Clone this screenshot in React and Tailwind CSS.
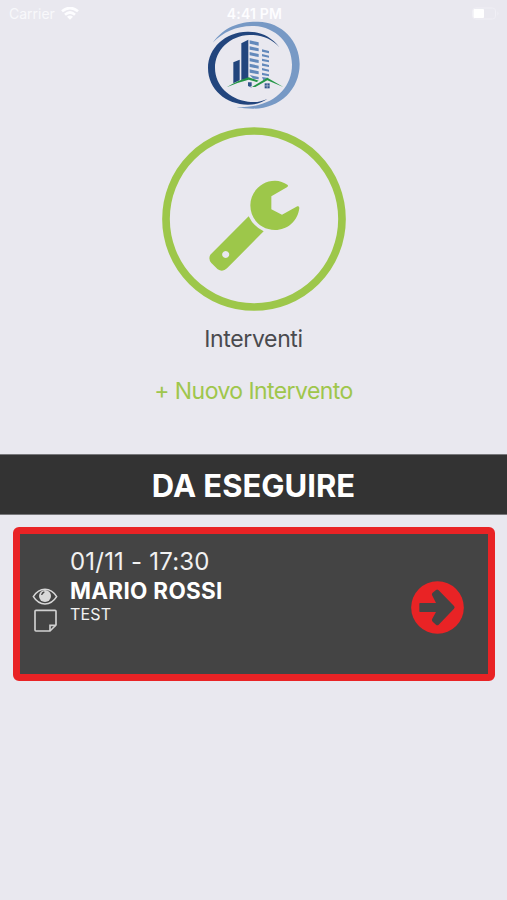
import React from 'react';

const jobs = [
  { id: 1, date: '01/11 - 17:30', customer: 'MARIO ROSSI', note: 'TEST' },
];

function App() {
  return (
    <div className="flex min-h-screen flex-col bg-[#e9e8ef] font-['Inter',sans-serif]">
      <StatusBar />

      <header className="flex flex-col items-center">
        <Logo />
        <WrenchBadge />
        <h1 className="mt-[13px] text-[23px] leading-[30px] tracking-[-0.35px] text-[#4a4a4e]">Interventi</h1>
        <button className="mt-[22px] text-[23px] leading-[30px] tracking-[-0.58px] text-[#9fc64c]">+ Nuovo Intervento</button>
      </header>

      <h2 className="mt-[48px] h-[61px] border-y border-[#77777a] bg-[#333333] text-center text-[31px] leading-[61px] font-bold text-white">
        DA ESEGUIRE
      </h2>

      <main className="px-[13px] pt-3">
        {jobs.map(job => (
          <JobCard key={job.id} job={job} />
        ))}
      </main>
    </div>
  );
}

function StatusBar() {
  return (
    <div className="grid h-5 grid-cols-3 items-end pr-[7px] pl-[9px] text-[14px] leading-[13px] text-[#f8f8fb]">
      <div className="flex items-center gap-[6px]">
        <span>Carrier</span>
        <svg className="h-[13px] w-[18px]" viewBox="0 0 54 39" fill="none" stroke="#fdfdff" strokeWidth="8">
          <path d="M3 13Q27 -7 51 13" />
          <path d="M12 23Q27 10 42 23" />
          <path d="M27 38l-9-9q9-7 18 0z" fill="#fdfdff" stroke="none" />
        </svg>
      </div>
      <span className="text-center font-semibold tracking-[0.2px] text-[#fdfdff]">4:41 PM</span>
      <div className="flex items-center justify-end">
        <svg className="h-[13px] w-[29px]" viewBox="0 0 29 13">
          <rect x="1.5" y="1" width="23" height="11" rx="3" fill="none" stroke="#f0eff5" />
          <rect x="2.5" y="2" width="10.5" height="9" rx="1" fill="#fff" />
          <path d="M26.5 4.5q2 2 0 4z" fill="#f0eff5" />
        </svg>
      </div>
    </div>
  );
}

function Logo() {
  return (
    <svg className="h-[90px] w-[100px]" viewBox="12 60 300 270">
      {/* outer ring */}
      <path d="M38 128C74 78 122 64 174 65C246 66 299 124 299 192C299 268 240 326 160 326C142 326 124 325 110 321C128 322 144 321 160 318C232 306 276 256 276 194C276 130 226 80 160 78C110 77 70 96 38 128Z" fill="#7799c5" />
      {/* inner ring */}
      <path d="M238 142C214 109 178 94 142 95C76 96 24 144 24 204C24 268 78 314 144 314C168 314 186 308 202 297C182 306 164 308 144 305C88 298 45 256 45 204C45 150 90 107 148 105C184 104 214 116 238 142Z" fill="#22457d" />
      {/* towers */}
      <path d="M100 187L119 179V241L100 250Z" fill="#22457d" />
      <path d="M124 130L145 119V236L124 240Z" fill="#22457d" />
      <path d="M149 121L176 127V137L149 131ZM149 139L176 145V154L149 149ZM149 156L176 162V171L149 166ZM149 174L176 180V189L149 184ZM149 191L176 197V206L149 201ZM149 208L176 214V223L149 218ZM149 225L176 231V238L160 236Z" fill="#6389bb" />
      <path d="M186 148L207 153V160L186 155ZM186 162L207 167V173L186 169ZM186 176L207 181V187L186 183ZM186 190L207 195V201L186 197ZM186 204L207 209V215L186 211ZM186 218L207 223V229L186 225ZM186 231L207 234L190 241Z" fill="#6389bb" />
      {/* roofs */}
      <path d="M80 262Q116 240 146 232L176 242L170 246L146 239Q112 247 80 262Z" fill="#249646" />
      <path d="M156 261L202 233L250 261L202 241L166 261Z" fill="#249646" />
      <path d="M144 247h11v12h-5l7 5-13-6z" fill="#31558b" />
      <rect x="194" y="250" width="15" height="15" fill="#31558b" />
      <path d="M201.500 250v15M194 257.500h15" stroke="#e9e8ef" strokeWidth="1.5" />
    </svg>
  );
}

function WrenchBadge() {
  return (
    <svg className="mt-[17px] h-[184px] w-[184px]" viewBox="21 21 552 552">
      <circle cx="297" cy="297" r="264" fill="none" stroke="#9dc74a" strokeWidth="23" />
      <g fill="#9dc74a">
        <path d="M397 194Q401 197 397 201L349 229V268L381 284L427 259Q433 257 433 264C429 302 398 330 360 330C318 330 286 298 286 256C286 215 320 182 360 182C374 182 387 187 397 194Z" />
        <path fillRule="evenodd" d="M281 289Q294 318 326 334L216 445Q203 458 188 448L169 429Q159 417 166 404ZM212 393a10.500 10.500 0 1 0 .1 0z" />
      </g>
    </svg>
  );
}

function JobCard({ job }) {
  return (
    <article className="flex h-[154px] w-[482px] rounded-[6px] border-[7.5px] border-[#e92325] bg-[#444444] text-[#f1f1f1]">
      <div className="flex w-[50px] flex-col items-center pt-[54px]">
        <EyeIcon />
        <NoteIcon />
      </div>
      <div className="flex-1 pt-[13px]">
        <p className="text-[24px] leading-[30px] tracking-[0.2px]">{job.date}</p>
        <p className="text-[22.5px] leading-[27px] font-bold tracking-[0.3px] text-white">{job.customer}</p>
        <p className="text-[16px] leading-[21px] tracking-[0.2px]">{job.note}</p>
      </div>
      <button className="mt-[6px] mr-[24px] self-center">
        <ArrowIcon />
      </button>
    </article>
  );
}

function EyeIcon() {
  return (
    <svg className="h-[17px] w-[26px]" viewBox="0 0 78 51" fill="none" stroke="#d8d8d8" strokeWidth="4.500">
      <path d="M4 26Q18 4 39 4T74 26Q60 48 39 48T4 26Z" />
      <circle cx="39" cy="24" r="18" fill="#d8d8d8" stroke="none" />
      <path d="M29 21Q30 14 37 12" stroke="#444" strokeWidth="4" />
    </svg>
  );
}

function NoteIcon() {
  return (
    <svg className="mt-[4px] h-[23px] w-[23px]" viewBox="0 0 69 69" fill="none" stroke="#d0d0d0" strokeWidth="5">
      <path d="M6 4H63Q66 4 66 7V48L48 66H6Q3 66 3 63V7Q3 4 6 4Z" />
      <path d="M48 66V49H66" />
    </svg>
  );
}

function ArrowIcon() {
  return (
    <svg className="h-[53px] w-[53px]" viewBox="92 183 159 159">
      <circle cx="171.500" cy="262.500" r="79" fill="#e92325" />
      <path d="M119 249H167L155 225Q154 221 157 218L167 210Q171 207 175 211L221 258Q225 262 221 266L175 314Q171 318 167 314L157 305Q154 302 155 298L167 276H119Q117 276 117 273V252Q117 249 119 249Z" fill="#444" />
    </svg>
  );
}

export default App;
